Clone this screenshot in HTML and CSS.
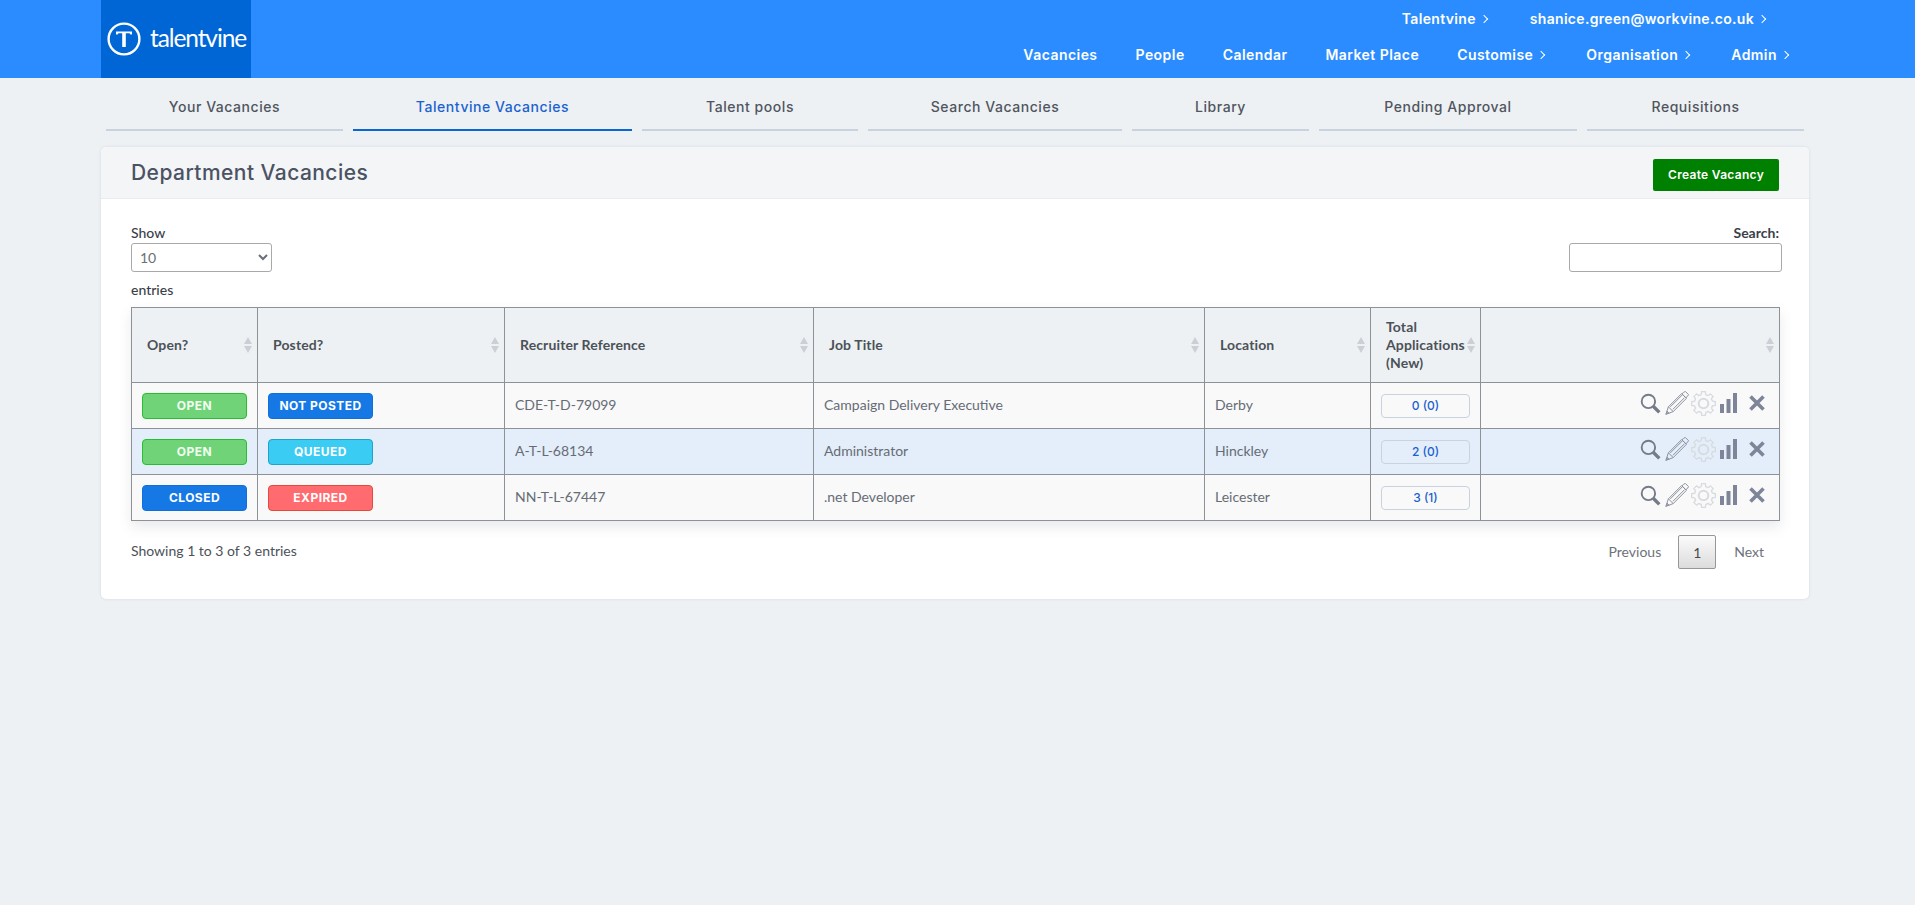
FILE: index.html
```html
<!DOCTYPE html>
<html lang="en">
<head>
<meta charset="utf-8">
<title>Department Vacancies</title>
<link rel="stylesheet" href="styles.css">
</head>
<body>
<svg class="sprite" aria-hidden="true">
  <symbol id="i-search" viewBox="0 0 20 20"><circle cx="8" cy="8" r="6.4" fill="none" stroke="currentColor" stroke-width="1.8"/><path d="M12.6 12.6l5.8 5.8" stroke="currentColor" stroke-width="3.2" fill="none"/></symbol>
  <symbol id="i-pencil" viewBox="0 0 24 24"><path d="M.8 23.4l2.6-7.6L16.6 2.6l4.8 4.8L8.2 20.6z M3.4 15.8l4.8 4.8 M5.3 15.9l11.9-11.9 M7.9 18.3L19.5 6.7 M2 20l2.2 2.4" fill="none" stroke="currentColor" stroke-width="1"/><path d="M18.6 1.4l1.7-1 3.2 3.2-1 1.8-1.6 1.3-3.9-3.9z" fill="none" stroke="currentColor" stroke-width="1"/><path d="M.8 23.4l.9-3 2.1 2.1z" fill="currentColor"/></symbol>
  <symbol id="i-tooth" viewBox="0 0 24 24"><path d="M9.87 3.46L10.2.64H13.8L14.13 3.46A8.8 8.8 0 0 1 16.53 4.46" fill="none" stroke="currentColor" stroke-width="1.3"/></symbol>
  <symbol id="i-gear" viewBox="0 0 24 24">
    <use href="#i-tooth" width="24" height="24"/>
    <use href="#i-tooth" width="24" height="24" transform="rotate(45 12 12)"/>
    <use href="#i-tooth" width="24" height="24" transform="rotate(90 12 12)"/>
    <use href="#i-tooth" width="24" height="24" transform="rotate(135 12 12)"/>
    <use href="#i-tooth" width="24" height="24" transform="rotate(180 12 12)"/>
    <use href="#i-tooth" width="24" height="24" transform="rotate(225 12 12)"/>
    <use href="#i-tooth" width="24" height="24" transform="rotate(270 12 12)"/>
    <use href="#i-tooth" width="24" height="24" transform="rotate(315 12 12)"/>
    <circle cx="12" cy="12" r="4.6" fill="none" stroke="currentColor" stroke-width="2"/>
  </symbol>
  <symbol id="i-bars" viewBox="0 0 17 20"><path d="M0 11h4v9H0zM6.5 6h4v14h-4zM13 0h4v20h-4z" fill="currentColor"/></symbol>
  <symbol id="i-close" viewBox="0 0 16 16"><path d="M1.5 1.5l13 13M14.5 1.5l-13 13" fill="none" stroke="currentColor" stroke-width="3.6"/></symbol>
  <symbol id="i-sort" viewBox="0 0 8 16"><path d="M4 0l4 7H0zM4 16L0 9h8z" fill="currentColor"/></symbol>
</svg>

<header class="topbar">
  <a class="logo" href="#">
    <svg class="logo-mark" viewBox="0 0 34 34" aria-hidden="true">
      <circle cx="17" cy="17" r="15.4" fill="none" stroke="#fff" stroke-width="2.4"/>
      <path d="M9 9.5h16v3h-1.5l-1-1.2H18.8V25h-3.6V11.3h-3.7l-1 1.2H9z" fill="#fff"/>
    </svg>
    <span class="logo-text">talentvine</span>
  </a>
  <div class="topnav">
    <nav class="nav-account">
      <a class="nav-link caret" href="#">Talentvine</a>
      <a class="nav-link caret" href="#">shanice.green@workvine.co.uk</a>
    </nav>
    <nav class="nav-main">
      <a class="nav-link" href="#">Vacancies</a>
      <a class="nav-link" href="#">People</a>
      <a class="nav-link" href="#">Calendar</a>
      <a class="nav-link" href="#">Market Place</a>
      <a class="nav-link caret" href="#">Customise</a>
      <a class="nav-link caret" href="#">Organisation</a>
      <a class="nav-link caret" href="#">Admin</a>
    </nav>
  </div>
</header>

<nav class="tabs">
  <a class="tab" href="#">Your Vacancies</a>
  <a class="tab tab-active" href="#">Talentvine Vacancies</a>
  <a class="tab" href="#">Talent pools</a>
  <a class="tab" href="#">Search Vacancies</a>
  <a class="tab" href="#">Library</a>
  <a class="tab" href="#">Pending Approval</a>
  <a class="tab" href="#">Requisitions</a>
</nav>

<main class="panel">
  <div class="panel-head">
    <h1 class="panel-title">Department Vacancies</h1>
    <a class="btn-create" href="#">Create Vacancy</a>
  </div>
  <div class="panel-body">
    <div class="controls">
      <label class="length">
        <span>Show</span>
        <select class="length-select"><option>10</option></select>
        <span class="entries">entries</span>
      </label>
      <label class="search">
        <span>Search:</span>
        <input class="search-input" type="search">
      </label>
    </div>

    <table class="grid">
      <colgroup>
        <col class="c-open"><col class="c-posted"><col class="c-ref"><col class="c-job"><col class="c-loc"><col class="c-total"><col class="c-actions">
      </colgroup>
      <thead>
        <tr>
          <th><div class="th-in"><span>Open?</span><svg class="sort"><use href="#i-sort"/></svg></div></th>
          <th><div class="th-in"><span>Posted?</span><svg class="sort"><use href="#i-sort"/></svg></div></th>
          <th><div class="th-in"><span>Recruiter Reference</span><svg class="sort"><use href="#i-sort"/></svg></div></th>
          <th><div class="th-in"><span>Job Title</span><svg class="sort"><use href="#i-sort"/></svg></div></th>
          <th><div class="th-in"><span>Location</span><svg class="sort"><use href="#i-sort"/></svg></div></th>
          <th><div class="th-in"><span>Total Applications (New)</span><svg class="sort"><use href="#i-sort"/></svg></div></th>
          <th><div class="th-in th-end"><svg class="sort"><use href="#i-sort"/></svg></div></th>
        </tr>
      </thead>
      <tbody>
        <tr>
          <td class="td-badge"><span class="badge b-green">OPEN</span></td>
          <td class="td-badge"><span class="badge b-blue">NOT POSTED</span></td>
          <td>CDE-T-D-79099</td>
          <td>Campaign Delivery Executive</td>
          <td>Derby</td>
          <td class="td-count"><a class="count" href="#">0 (0)</a></td>
          <td class="td-actions"><div class="actions">
            <svg class="ic ic-search"><use href="#i-search"/></svg>
            <svg class="ic ic-pencil"><use href="#i-pencil"/></svg>
            <svg class="ic ic-gear"><use href="#i-gear"/></svg>
            <svg class="ic ic-bars"><use href="#i-bars"/></svg>
            <svg class="ic ic-close"><use href="#i-close"/></svg>
          </div></td>
        </tr>
        <tr class="row-hl">
          <td class="td-badge"><span class="badge b-green">OPEN</span></td>
          <td class="td-badge"><span class="badge b-cyan">QUEUED</span></td>
          <td>A-T-L-68134</td>
          <td>Administrator</td>
          <td>Hinckley</td>
          <td class="td-count"><a class="count" href="#">2 (0)</a></td>
          <td class="td-actions"><div class="actions">
            <svg class="ic ic-search"><use href="#i-search"/></svg>
            <svg class="ic ic-pencil"><use href="#i-pencil"/></svg>
            <svg class="ic ic-gear"><use href="#i-gear"/></svg>
            <svg class="ic ic-bars"><use href="#i-bars"/></svg>
            <svg class="ic ic-close"><use href="#i-close"/></svg>
          </div></td>
        </tr>
        <tr>
          <td class="td-badge"><span class="badge b-blue">CLOSED</span></td>
          <td class="td-badge"><span class="badge b-red">EXPIRED</span></td>
          <td>NN-T-L-67447</td>
          <td>.net Developer</td>
          <td>Leicester</td>
          <td class="td-count"><a class="count" href="#">3 (1)</a></td>
          <td class="td-actions"><div class="actions">
            <svg class="ic ic-search"><use href="#i-search"/></svg>
            <svg class="ic ic-pencil"><use href="#i-pencil"/></svg>
            <svg class="ic ic-gear"><use href="#i-gear"/></svg>
            <svg class="ic ic-bars"><use href="#i-bars"/></svg>
            <svg class="ic ic-close"><use href="#i-close"/></svg>
          </div></td>
        </tr>
      </tbody>
    </table>

    <div class="foot">
      <div class="info">Showing 1 to 3 of 3 entries</div>
      <div class="pager">
        <a class="page-link" href="#">Previous</a>
        <a class="page-current" href="#">1</a>
        <a class="page-link" href="#">Next</a>
      </div>
    </div>
  </div>
</main>
</body>
</html>
```
FILE: styles.css
```css
* { box-sizing: border-box; }

html, body { margin: 0; padding: 0; }

body {
  min-height: 905px;
  background: #edf1f4;
  font-family: "Lato", "Liberation Sans", sans-serif;
  font-size: 14px;
  color: #4c5158;
}

a { color: inherit; text-decoration: none; }

.sprite { display: block; width: 0; height: 0; overflow: hidden; }

/* Top bar */
.topbar {
  display: flex;
  justify-content: space-between;
  height: 78px;
  padding: 0 127px 0 101px;
  background: #2a8cff;
}

.logo {
  display: flex;
  align-items: center;
  gap: 9px;
  width: 150px;
  padding-left: 6px;
  background: #0066d6;
  color: #fff;
}

.logo-mark { width: 34px; height: 34px; flex: none; }

.logo-text {
  font-family: "Lato", sans-serif;
  font-weight: 400;
  font-size: 24.5px;
  letter-spacing: -1.1px;
  line-height: 1;
  margin-top: -1px;
}

.topnav {
  display: flex;
  flex-direction: column;
  align-items: flex-end;
  font-family: "Inter", "Liberation Sans", sans-serif;
  font-size: 14px;
  font-weight: 600;
  color: #fff;
}

.nav-account {
  display: flex;
  gap: 39px;
  height: 36px;
  align-items: center;
  padding-right: 23px;
  letter-spacing: 0.32px;
}

.nav-main {
  display: flex;
  gap: 38px;
  height: 40px;
  align-items: center;
  margin-top: -2px;
  letter-spacing: 0.45px;
}

.nav-link { white-space: nowrap; }

.caret::after {
  content: "";
  display: inline-block;
  width: 5px;
  height: 5px;
  margin-left: 5px;
  border-top: 1px solid #fff;
  border-right: 1px solid #fff;
  transform: rotate(45deg);
  vertical-align: 2px;
}

.caret + .caret { margin-left: 4px; }

/* Tabs */
.tabs {
  display: grid;
  grid-template-columns: 237px 279px 216px 254px 177px 258px 217px;
  gap: 10px;
  height: 53px;
  margin: 0 0 16px 106px;
  width: 1698px;
}

.tab {
  display: flex;
  align-items: center;
  justify-content: center;
  padding-top: 6px;
  border-bottom: 2px solid #c9d3e0;
  font-family: "Inter", "Liberation Sans", sans-serif;
  font-size: 14px;
  font-weight: 500;
  letter-spacing: 0.55px;
  color: #50555e;
}

.tab-active { color: #1b62cf; border-bottom-color: #0a66d2; }

/* Panel */
.panel {
  width: 1708px;
  height: 452px;
  margin-left: 101px;
  background: #fff;
  border-radius: 5px;
  box-shadow: 0 0 3px rgba(60, 80, 110, .14);
  overflow: hidden;
}

.panel-head {
  display: flex;
  align-items: center;
  justify-content: space-between;
  height: 52px;
  padding: 0 30px;
  background: #f3f5f7;
  border-bottom: 1px solid #e8ebef;
}

.panel-title {
  margin: 0 0 1px;
  font-family: "Inter", "Liberation Sans", sans-serif;
  font-size: 21px;
  font-weight: 500;
  letter-spacing: 0.45px;
  color: #4b5263;
}

.btn-create {
  display: flex;
  align-items: center;
  justify-content: center;
  width: 126px;
  height: 32px;
  margin-top: 4px;
  background: #008000;
  border-radius: 2px;
  color: #fff;
  font-family: "Inter", "Liberation Sans", sans-serif;
  font-size: 12px;
  font-weight: 600;
  letter-spacing: 0.3px;
}

.panel-body { padding: 24px 30px 0; }

/* Controls */
.controls {
  display: flex;
  justify-content: space-between;
  height: 84px;
  font-weight: 500;
  color: #3b3f4a;
  line-height: 20px;
}

.length { display: flex; flex-direction: column; align-items: flex-start; }

.length-select {
  width: 141px;
  height: 29px;
  padding: 0 4px;
  background: #fff;
  border: 1px solid #a9a9a9;
  border-radius: 3px;
  font: 14px "Lato", sans-serif;
  color: #6a6f78;
}

.entries { margin-top: 8px; }

.search {
  display: flex;
  flex-direction: column;
  align-items: flex-end;
  margin-right: -3px;
}

.search span { margin-right: 3px; font-weight: 700; }

.search-input {
  width: 213px;
  height: 29px;
  background: #fff;
  border: 1px solid #a9a9a9;
  border-radius: 3px;
}

/* Table */
.grid {
  width: 1648px;
  table-layout: fixed;
  border-collapse: collapse;
  box-shadow: 0 6px 12px rgba(70, 80, 100, .12);
}

.c-open { width: 126px; }
.c-posted { width: 247px; }
.c-ref { width: 309px; }
.c-job { width: 391px; }
.c-loc { width: 166px; }
.c-total { width: 110px; }
.c-actions { width: 299px; }

.grid th, .grid td { border: 1px solid #8d9299; }

.grid th {
  height: 75px;
  padding: 0 5px 1px 15px;
  background: #edf1f4;
  font-weight: 700;
  font-size: 14px;
  line-height: 18px;
  letter-spacing: 0.12px;
  text-align: left;
  color: #4c5158;
}

.th-in {
  display: flex;
  align-items: center;
  justify-content: space-between;
}

.th-end { justify-content: flex-end; }

.sort { flex: none; width: 8px; height: 16px; color: #ccd0d6; }

.grid td {
  height: 46px;
  padding: 0 10px 2px;
  background: #f9f9f9;
  color: #666c75;
  font-size: 14px;
}

.grid .row-hl td { background: #e3eefa; }

.grid .td-badge { padding: 0 0 0 10px; }

.badge {
  display: flex;
  align-items: center;
  justify-content: center;
  width: 105px;
  height: 26px;
  border: 1px solid;
  border-radius: 4px;
  color: #fff;
  font-family: "Inter", "Liberation Sans", sans-serif;
  font-size: 12px;
  font-weight: 700;
  letter-spacing: 0.45px;
}

.b-green { background: #70d377; border-color: #25bf30; color: #f2fff2; }
.b-blue { background: #1678e5; border-color: #116fdb; }
.b-cyan { background: #3accf2; border-color: #1ea3c9; }
.b-red { background: #ff6b6e; border-color: #e5483d; }

.grid .td-count { padding: 0 0 0 10px; }

.count {
  display: flex;
  align-items: center;
  justify-content: center;
  width: 89px;
  height: 24px;
  border: 1px solid #c9d3e0;
  border-radius: 4px;
  color: #1b62cf;
  font-family: "Inter", "Liberation Sans", sans-serif;
  font-size: 12px;
  font-weight: 500;
}

.grid .td-actions { padding: 0 14px 0 0; }

.actions {
  display: flex;
  align-items: center;
  justify-content: flex-end;
  margin-top: -5px;
}

.ic { flex: none; display: block; }
.ic-search { width: 21px; height: 21px; color: #747a88; margin-right: 4px; }
.ic-pencil { width: 24px; height: 24px; color: #8d929e; margin-right: 2px; }
.ic-gear { width: 25px; height: 25px; color: #d8dbdf; margin-right: 4px; }
.ic-bars { width: 17px; height: 20px; color: #7e8598; margin-right: 12px; }
.ic-close { width: 16px; height: 16px; color: #7e8598; }

/* Footer */
.foot {
  display: flex;
  align-items: flex-start;
  justify-content: space-between;
  margin-top: 14px;
  font-size: 14px;
}

.info { margin-top: 6px; line-height: 20px; color: #4c5158; }

.pager { display: flex; align-items: center; padding-right: 15px; color: #6d727a; }

.page-link { padding-bottom: 2px; }

.page-current {
  display: flex;
  align-items: center;
  justify-content: center;
  width: 38px;
  height: 34px;
  margin: 0 18px 0 17px;
  border: 1px solid #979797;
  border-radius: 2px;
  background: linear-gradient(#fbfbfb, #dcdcdc);
  color: #4a4a4a;
}
```
